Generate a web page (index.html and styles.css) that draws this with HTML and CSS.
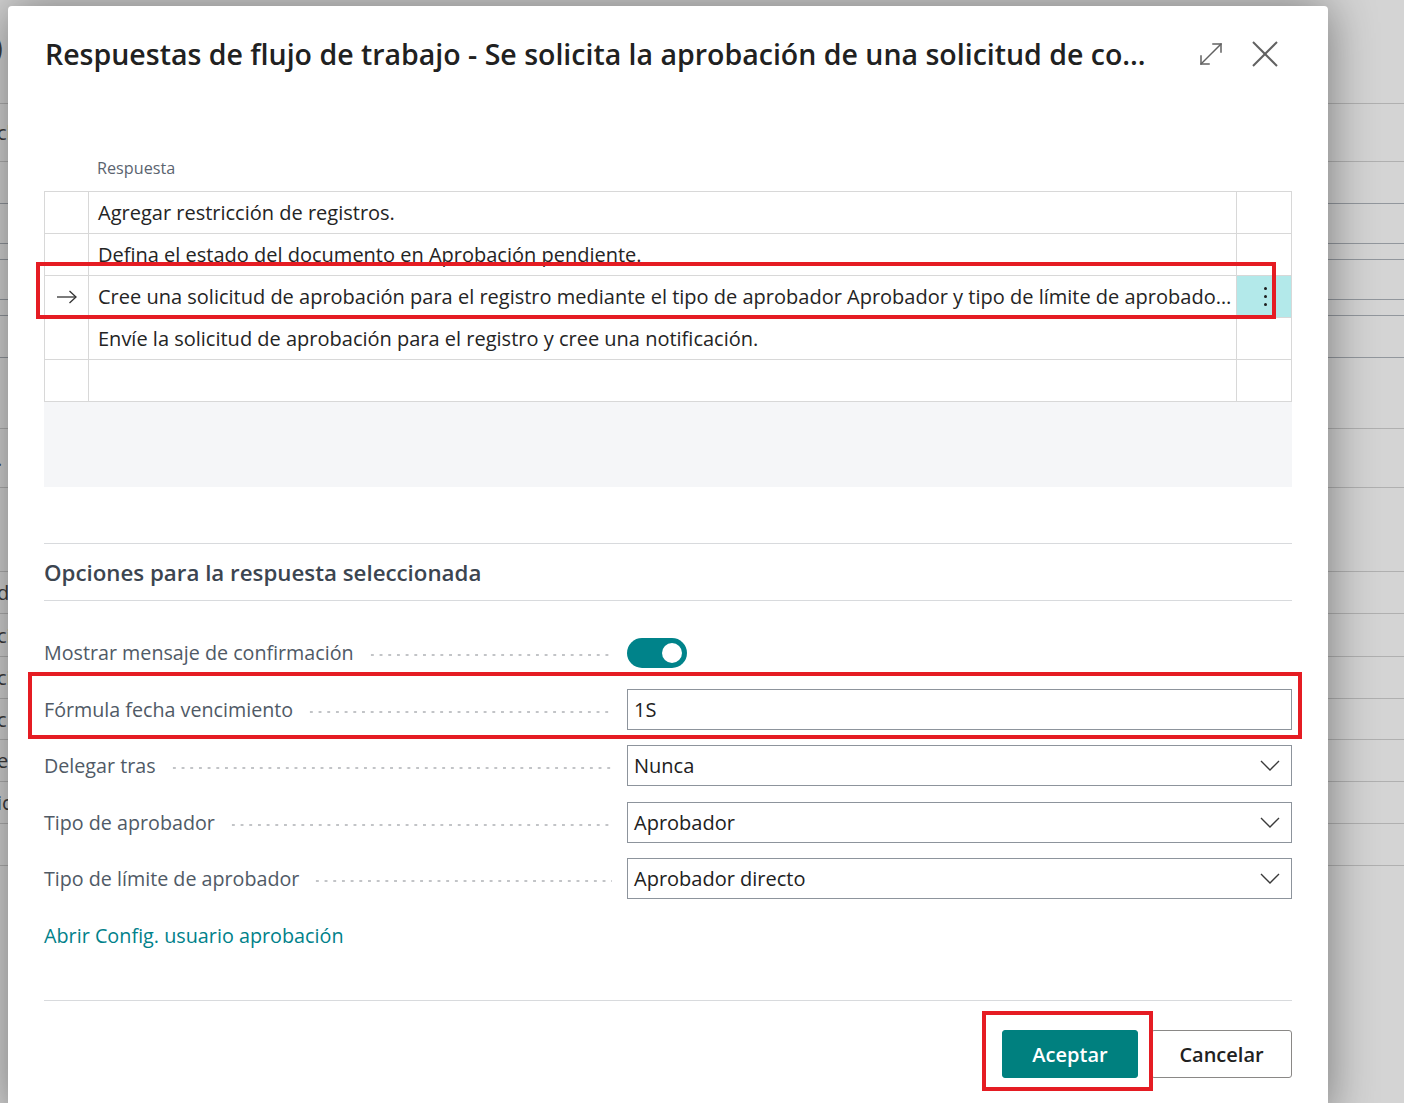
FILE: index.html
```html
<!DOCTYPE html>
<html lang="es">
<head>
<meta charset="utf-8">
<title>Respuestas de flujo de trabajo</title>
<link rel="stylesheet" href="styles.css">
</head>
<body>
<div class="bg">
  <div class="bgrow r1"><span class="frag big">)</span></div>
  <div class="bgrow r2"><span class="frag">cl</span></div>
  <div class="bgrow r3 dk"></div>
  <div class="bgrow r4 dk"></div>
  <div class="bgrow r5 dk"></div>
  <div class="bgrow r6 dk"></div>
  <div class="bgrow r7 dk"></div>
  <div class="bgrow r8 dk"></div>
  <div class="bgrow r9"></div>
  <div class="bgrow r10"><span class="frag">.</span></div>
  <div class="bgrow r11"></div>
  <div class="bgrow r12"><span class="frag">d</span></div>
  <div class="bgrow r13"><span class="frag">ci</span></div>
  <div class="bgrow r14"><span class="frag">ci</span></div>
  <div class="bgrow r15"><span class="frag">c</span></div>
  <div class="bgrow r16"><span class="frag">e</span></div>
  <div class="bgrow r17"><span class="frag">ic</span></div>
  <div class="bgrow r18"></div>
</div>

<div class="dialog">
  <header class="dlg-head">
    <h1 class="dlg-title">Respuestas de flujo de trabajo - Se solicita la aprobación de una solicitud de co…</h1>
    <div class="dlg-actions">
      <button class="icon-btn" aria-label="Expandir">
        <svg width="24" height="24" viewBox="0 0 24 24" fill="none" stroke="#616161" stroke-width="1.5" stroke-linecap="square">
          <path d="M2 22 L22 2"/>
          <path d="M14 2 H22 V10"/>
          <path d="M2 14 V22 H10"/>
        </svg>
      </button>
      <button class="icon-btn" aria-label="Cerrar">
        <svg width="26" height="26" viewBox="0 0 26 26" fill="none" stroke="#616161" stroke-width="2">
          <path d="M1 1 L25 25"/>
          <path d="M25 1 L1 25"/>
        </svg>
      </button>
    </div>
  </header>

  <div class="col-head"><span class="col-name">Respuesta</span></div>

  <div class="grid">
    <div class="cell c-ind"></div>
    <div class="cell c-text">Agregar restricción de registros.</div>
    <div class="cell c-menu"></div>

    <div class="cell c-ind"></div>
    <div class="cell c-text">Defina el estado del documento en Aprobación pendiente.</div>
    <div class="cell c-menu"></div>

    <div class="cell c-ind">
      <svg width="22" height="14" viewBox="0 0 22 14" fill="none" stroke="#333" stroke-width="1.3">
        <path d="M1 7 H20"/>
        <path d="M13.5 1 L20 7 L13.5 13"/>
      </svg>
    </div>
    <div class="cell c-text">Cree una solicitud de aprobación para el registro mediante el tipo de aprobador Aprobador y tipo de límite de aprobador Aprobador directo.</div>
    <div class="cell c-menu sel"><span class="vdots"><i></i><i></i><i></i></span></div>

    <div class="cell c-ind"></div>
    <div class="cell c-text">Envíe la solicitud de aprobación para el registro y cree una notificación.</div>
    <div class="cell c-menu"></div>

    <div class="cell c-ind"></div>
    <div class="cell c-text"></div>
    <div class="cell c-menu"></div>
  </div>
  <div class="grid-empty"></div>

  <section class="opts">
    <h2 class="opts-title">Opciones para la respuesta seleccionada</h2>
    <div class="fields">
      <div class="field">
        <div class="flabel"><span class="ltext">Mostrar mensaje de confirmación</span><span class="dots"></span></div>
        <div class="fval"><span class="toggle"><span class="knob"></span></span></div>
      </div>
      <div class="field">
        <div class="flabel"><span class="ltext">Fórmula fecha vencimiento</span><span class="dots"></span></div>
        <div class="fval"><div class="input">1S</div></div>
      </div>
      <div class="field">
        <div class="flabel"><span class="ltext">Delegar tras</span><span class="dots"></span></div>
        <div class="fval"><div class="input select"><span>Nunca</span>
          <svg class="chev" width="20" height="11" viewBox="0 0 20 11" fill="none" stroke="#3a3a3a" stroke-width="1.4"><path d="M1 1 L10 10 L19 1"/></svg></div></div>
      </div>
      <div class="field">
        <div class="flabel"><span class="ltext">Tipo de aprobador</span><span class="dots"></span></div>
        <div class="fval"><div class="input select"><span>Aprobador</span>
          <svg class="chev" width="20" height="11" viewBox="0 0 20 11" fill="none" stroke="#3a3a3a" stroke-width="1.4"><path d="M1 1 L10 10 L19 1"/></svg></div></div>
      </div>
      <div class="field">
        <div class="flabel"><span class="ltext">Tipo de límite de aprobador</span><span class="dots"></span></div>
        <div class="fval"><div class="input select"><span>Aprobador directo</span>
          <svg class="chev" width="20" height="11" viewBox="0 0 20 11" fill="none" stroke="#3a3a3a" stroke-width="1.4"><path d="M1 1 L10 10 L19 1"/></svg></div></div>
      </div>
    </div>
    <a class="link" href="#">Abrir Config. usuario aprobación</a>
  </section>

  <footer class="dlg-foot">
    <button class="btn primary">Aceptar</button>
    <button class="btn">Cancelar</button>
  </footer>
</div>

<div class="mark m1"></div>
<div class="mark m2"></div>
<div class="mark m3"></div>
</body>
</html>
```

FILE: styles.css
```css
* { box-sizing: border-box; }

body {
  margin: 0;
  width: 1404px;
  height: 1103px;
  overflow: hidden;
  position: relative;
  background: #d4d4d4;
  font-family: "Open Sans", "Noto Sans", "DejaVu Sans", sans-serif;
  color: #212121;
}

/* background page under the overlay */
.bg { width: 100%; }
.bgrow {
  border-bottom: 1px solid #b0b0b0;
  display: flex;
  align-items: center;
  overflow: hidden;
}
.bgrow.dk { border-bottom-color: #92979d; }
.r1 { height: 104px; }
.r2 { height: 58px; }
.r3 { height: 42px; }
.r4 { height: 40px; }
.r5 { height: 16px; }
.r6 { height: 40px; }
.r7 { height: 16px; }
.r8 { height: 42px; }
.r9 { height: 71px; }
.r10 { height: 59px; }
.r11 { height: 84px; }
.r12 { height: 42px; }
.r13 { height: 43px; }
.r14 { height: 42px; }
.r15 { height: 41px; }
.r16 { height: 42px; }
.r17 { height: 42px; }
.r18 { height: 42px; }
.frag {
  font-size: 20px;
  color: #3c3c3c;
  margin-left: -3px;
  white-space: nowrap;
}
.frag.big { font-size: 30px; margin-left: -6px; margin-top: -10px; }

/* dialog */
.dialog {
  position: absolute;
  left: 8px;
  top: 6px;
  width: 1320px;
  height: 1112px;
  background: #fff;
  border-radius: 4px 4px 0 0;
  box-shadow: 0 0 48px rgba(0, 0, 0, 0.45);
  padding: 0 36px;
}

.dlg-head {
  display: flex;
  align-items: center;
  padding-top: 30px;
  height: 66px;
}
.dlg-title {
  margin: 0 0 0 1px;
  flex: 1;
  min-width: 0;
  font-size: 28.5px;
  line-height: 36px;
  font-weight: 600;
  color: #212121;
  white-space: nowrap;
  overflow: hidden;
  text-overflow: ellipsis;
}
.dlg-actions {
  display: flex;
  gap: 22px;
  margin-left: 30px;
  margin-right: 11px;
}
.icon-btn {
  width: 32px;
  height: 32px;
  padding: 0;
  border: 0;
  background: transparent;
  display: flex;
  align-items: center;
  justify-content: center;
}

.col-head {
  margin-top: 84px;
  height: 24px;
  line-height: 24px;
  padding-left: 53px;
  margin-bottom: 11px;
}
.col-name {
  font-size: 16.2px;
  color: #5b6470;
}

/* grid */
.grid {
  display: grid;
  grid-template-columns: 44px 1fr 55px;
  border-top: 1px solid #d8d8d8;
  border-left: 1px solid #d8d8d8;
}
.cell {
  height: 42px;
  border-right: 1px solid #d8d8d8;
  border-bottom: 1px solid #d8d8d8;
  display: flex;
  align-items: center;
  min-width: 0;
}
.c-ind { justify-content: center; padding-left: 1px; }
.c-text {
  padding-left: 9px;
  padding-right: 1px;
  font-size: 20px;
  color: #242424;
  white-space: nowrap;
  overflow: hidden;
  text-overflow: ellipsis;
  display: block;
  line-height: 41px;
}
.c-menu { justify-content: center; padding-left: 2px; }
.c-menu.sel { background: #b3e9ea; }
.vdots {
  display: flex;
  flex-direction: column;
  gap: 5px;
}
.vdots i {
  display: block;
  width: 3px;
  height: 3px;
  border-radius: 50%;
  background: #1e1e1e;
}
.grid-empty {
  height: 85px;
  background: #f5f6f8;
}

/* options */
.opts {
  margin-top: 56px;
  border-top: 1px solid #d8dadd;
}
.opts-title {
  margin: 0;
  height: 57px;
  line-height: 57px;
  border-bottom: 1px solid #d8dadd;
  font-size: 22.3px;
  font-weight: 600;
  color: #3c4550;
  padding-left: 0;
}
.fields {
  margin-top: 31px;
  display: flex;
  flex-direction: column;
  gap: 15.5px;
}
.field {
  display: flex;
  height: 41px;
  align-items: center;
}
.flabel {
  width: 583px;
  display: flex;
  align-items: center;
  padding-right: 15px;
  padding-left: 0;
}
.ltext {
  font-size: 19.7px;
  color: #505a66;
  white-space: nowrap;
}
.dots {
  flex: 1;
  height: 4px;
  margin-left: 14px;
  margin-top: 5px;
  background-image: radial-gradient(circle, #c2c4c7 1.1px, transparent 1.5px);
  background-size: 8.7px 4px;
  background-repeat: repeat-x;
  background-position: left center;
}
.fval {
  flex: 1;
  height: 41px;
  display: flex;
  align-items: center;
}
.toggle {
  width: 60px;
  height: 30px;
  border-radius: 15px;
  background: #00838a;
  display: flex;
  align-items: center;
  justify-content: flex-end;
  padding-right: 5px;
}
.knob {
  width: 20px;
  height: 20px;
  border-radius: 50%;
  background: #fff;
}
.input {
  width: 100%;
  height: 41px;
  border: 1px solid #8d949c;
  display: flex;
  align-items: center;
  padding-left: 6px;
  padding-right: 11px;
  font-size: 20px;
  color: #212121;
}
.select { justify-content: space-between; }
.chev { display: block; }

.link {
  display: block;
  margin-top: 23px;
  line-height: 28px;
  font-size: 19.8px;
  color: #00818a;
  text-decoration: none;
  width: max-content;
}

/* footer */
.dlg-foot {
  margin-top: 50px;
  border-top: 1px solid #d8dadd;
  padding-top: 29px;
  display: flex;
  justify-content: flex-end;
  gap: 13px;
}
.btn {
  height: 48px;
  font-family: inherit;
  font-size: 20px;
  font-weight: 600;
  border-radius: 3px;
  border: 1px solid #8a8886;
  background: #fff;
  color: #212121;
  width: 141px;
  padding: 0;
}
.btn.primary {
  width: 136px;
  background: #00807f;
  border-color: #00807f;
  color: #fff;
}

/* red annotation boxes */
.mark {
  position: absolute;
  border: 4px solid #e51c23;
  pointer-events: none;
}
.m1 { left: 36px; top: 262px; width: 1240px; height: 57px; }
.m2 { left: 28px; top: 672px; width: 1274px; height: 67px; }
.m3 { left: 982px; top: 1011px; width: 171px; height: 80px; }
```
